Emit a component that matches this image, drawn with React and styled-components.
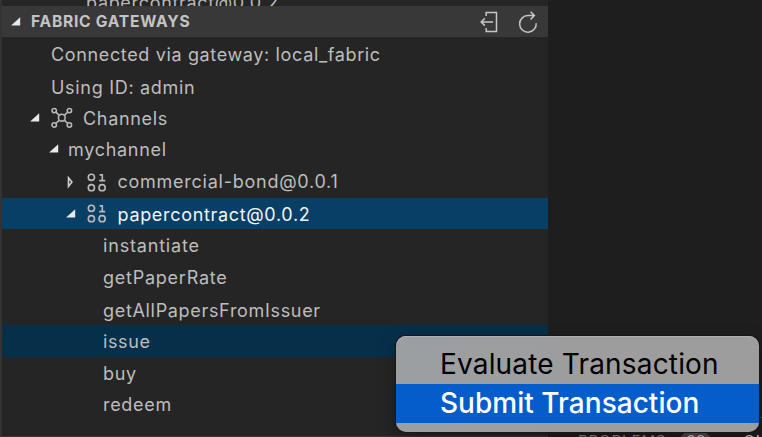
import React from "react";
import styled, { createGlobalStyle } from "styled-components";

const Global = createGlobalStyle`
  * { box-sizing: border-box; }
  body { margin: 0; background: #1e1e1e; overflow: hidden; font-family: Inter, "Liberation Sans", sans-serif; }
  svg { display: block; flex: none; }
`;

const Window = styled.div`
  position: relative;
  display: flex;
  width: 762px;
  height: 437px;
  overflow: hidden;
  background: #1e1e1e;
`;
const ActivityEdge = styled.div`
  width: 2px;
  flex: none;
  background: #333333;
`;
const Sidebar = styled.aside`
  width: 546px;
  flex: none;
  background: #252526;
  display: flex;
  flex-direction: column;
`;
const PreviousRow = styled.div`
  height: 6px;
  flex: none;
  overflow: hidden;
  display: flex;
  align-items: flex-end;
  padding-left: 84px;
  font-size: 18px;
  line-height: 22px;
  letter-spacing: 0.68px;
  color: #b8b8b8;
`;
const PreviousLabel = styled.span`
  margin-bottom: -8px;
`;
const SectionHeader = styled.header`
  height: 31px;
  flex: none;
  display: flex;
  align-items: center;
  background: #383838;
  padding: 0 8px 0 9px;
  margin-bottom: 1px;
`;
const SectionTitle = styled.h2`
  margin: 0 auto 0 10px;
  font-size: 15.6px;
  line-height: 31px;
  font-weight: 700;
  letter-spacing: 0.76px;
  color: #c4c4c4;
  white-space: nowrap;
`;
const Actions = styled.div`
  display: flex;
  gap: 17px;
`;
const Row = styled.div`
  display: flex;
  flex: none;
  height: ${(p) => p.$height}px;
  padding-left: ${(p) => p.$indent}px;
  background: ${(p) => p.$background || "transparent"};
  color: ${(p) => p.$color || "#bdbdbd"};
`;
const Arrow = styled.span`
  padding-top: 11px;
  width: ${(p) => p.$width}px;
`;
const RowIcon = styled.span`
  padding-top: ${(p) => p.$top ?? 5}px;
  width: ${(p) => p.$width}px;
`;
const Label = styled.span`
  font-size: 18px;
  line-height: 33px;
  letter-spacing: ${(p) => p.$spacing ?? 0.68}px;
  white-space: nowrap;
`;
const BottomEdge = styled.div`
  height: 1px;
  margin-top: auto;
  background: #3a3a3b;
`;
const Editor = styled.main`
  flex: 1;
  min-width: 0;
  display: flex;
  flex-direction: column;
  justify-content: flex-end;
`;
const PanelTabs = styled.div`
  height: 20px;
  overflow: hidden;
  border-top: 1px solid #414141;
  padding: 13px 0 0 30px;
  display: flex;
  font-size: 15px;
  line-height: 20px;
  white-space: nowrap;
`;
const PanelTab = styled.span`
  letter-spacing: 0.9px;
  color: ${(p) => (p.$active ? "#d0d0d0" : "#858585")};
`;
const Badge = styled.span`
  height: 25px;
  margin: 0 31px 0 13px;
  width: 33px;
  flex: none;
  border-radius: 13px;
  background: #4d4d4d;
  color: #c8c8c8;
  text-align: center;
`;
const Menu = styled.div`
  position: absolute;
  left: 396px;
  top: 336px;
  width: 363px;
  height: 96px;
  padding-top: 8px;
  overflow: hidden;
  border-radius: 10px;
  background: linear-gradient(90deg, #9b9fa2, #9d9d9e 50%, #9d9d9d);
  box-shadow: 0 0 0 1px #171717, 0 8px 20px #0005, inset 0 1px #b0b0b0;
`;
const MenuItem = styled.div`
  height: ${(p) => (p.$active ? 39 : 40)}px;
  padding-left: 44px;
  font-size: 28px;
  line-height: ${(p) => (p.$active ? 39 : 40)}px;
  white-space: nowrap;
  letter-spacing: ${(p) => p.$spacing}px;
  font-weight: ${(p) => (p.$active ? 500 : 400)};
  color: ${(p) => (p.$active ? "#fff" : "#000")};
  background: ${(p) => (p.$active ? "#045dcb" : "transparent")};
`;

const OpenTriangle = () => (
  <svg width="10" height="10" viewBox="0 0 10 10">
    <path d="M9.2 .3V8.6H.1Z" fill="#e8e8e8" />
  </svg>
);
const ClosedTriangle = () => (
  <svg width="8" height="14" viewBox="0 0 8 14">
    <path d="M2.5 1.8V10.4L5.9 6.1Z" fill="none" stroke="#d0d0d0" strokeWidth="1.6" />
  </svg>
);
const ChannelsIcon = () => (
  <svg width="22" height="22" viewBox="0 0 22 22" fill="none" stroke="#b9b9b9" strokeWidth="1.55">
    <circle cx="10.8" cy="10.7" r="3.4" />
    <circle cx="3.2" cy="3.6" r="2.2" />
    <circle cx="18.4" cy="3.6" r="2.2" />
    <circle cx="3.2" cy="18" r="2.2" />
    <circle cx="18.4" cy="18" r="2.2" />
    <path d="M4.8 5.1 8.4 8.3M16.8 5.1 13.2 8.3M4.8 16.5 8.4 13.1M16.8 16.5 13.2 13.1" />
  </svg>
);
const ContractIcon = () => (
  <svg width="22" height="22" viewBox="0 0 22 22" fill="none" stroke="#b9b9b9" strokeWidth="1.6">
    <circle cx="5.4" cy="6.3" r="3.1" />
    <circle cx="5.4" cy="16.7" r="3.1" />
    <circle cx="16.1" cy="16.7" r="3.1" />
    <path d="M13.6 3.9H16.3V9.6M13.2 9.6H19.2" />
  </svg>
);
const ExitIcon = () => (
  <svg width="22" height="24" viewBox="0 0 22 24" fill="none" stroke="#c5c5c5" strokeWidth="1.5">
    <path d="M7.2 6V2.5H17.5V21.5H7.2V18M14 12H2.2M5.8 8.4 2.2 12 5.8 15.6" />
  </svg>
);
const RefreshIcon = () => (
  <svg width="22" height="24" viewBox="0 0 22 24" fill="none" stroke="#c5c5c5" strokeWidth="1.5">
    <path d="M18.2 13.2A8.3 8.3 0 1 1 9.9 5.6H16.4M12.6 1.8 16.4 5.6 12.6 9.4" />
  </svg>
);

const functions = [
  { name: "instantiate", height: 32, spacing: 0.82 },
  { name: "getPaperRate", height: 33, spacing: 0.76 },
  { name: "getAllPapersFromIssuer", height: 31 },
  { name: "issue", height: 32, background: "#062f4a", spacing: 0.6 },
  { name: "buy", height: 31 },
  { name: "redeem", height: 32 },
];

export default function App() {
  return (
    <Window>
      <Global />
      <ActivityEdge />
      <Sidebar>
        <PreviousRow><PreviousLabel>papercontract@0.0.2</PreviousLabel></PreviousRow>
        <SectionHeader>
          <OpenTriangle />
          <SectionTitle>FABRIC GATEWAYS</SectionTitle>
          <Actions><ExitIcon /><RefreshIcon /></Actions>
        </SectionHeader>
        <Row $height={33} $indent={49}><Label $spacing={0.64}>Connected via gateway: local_fabric</Label></Row>
        <Row $height={31} $indent={49}><Label $spacing={0.7}>Using ID: admin</Label></Row>
        <Row $height={31} $indent={28}>
          <Arrow $width={21}><OpenTriangle /></Arrow>
          <RowIcon $width={32}><ChannelsIcon /></RowIcon>
          <Label>Channels</Label>
        </Row>
        <Row $height={32} $indent={47}>
          <Arrow $width={19}><OpenTriangle /></Arrow>
          <Label $spacing={0.7}>mychannel</Label>
        </Row>
        <Row $height={33} $indent={64}>
          <Arrow $width={20}><ClosedTriangle /></Arrow>
          <RowIcon $width={31.5} $top={6}><ContractIcon /></RowIcon>
          <Label $spacing={0.75}>commercial-bond@0.0.1</Label>
        </Row>
        <Row $height={31} $indent={64} $background="#083f66" $color="#f4f4f4">
          <Arrow $width={20}><OpenTriangle /></Arrow>
          <RowIcon $width={31.5} $top={4}><ContractIcon /></RowIcon>
          <Label>papercontract@0.0.2</Label>
        </Row>
        {functions.map((f) => (
          <Row key={f.name} $height={f.height} $indent={101} $background={f.background}>
            <Label $spacing={f.spacing}>{f.name}</Label>
          </Row>
        ))}
        <BottomEdge />
      </Sidebar>
      <Editor>
        <PanelTabs>
          <PanelTab>PROBLEMS</PanelTab>
          <Badge>98</Badge>
          <PanelTab $active>OUTPUT</PanelTab>
        </PanelTabs>
      </Editor>
      <Menu>
        <MenuItem $spacing={0.17}>Evaluate Transaction</MenuItem>
        <MenuItem $active $spacing={0.03}>Submit Transaction</MenuItem>
      </Menu>
    </Window>
  );
}
